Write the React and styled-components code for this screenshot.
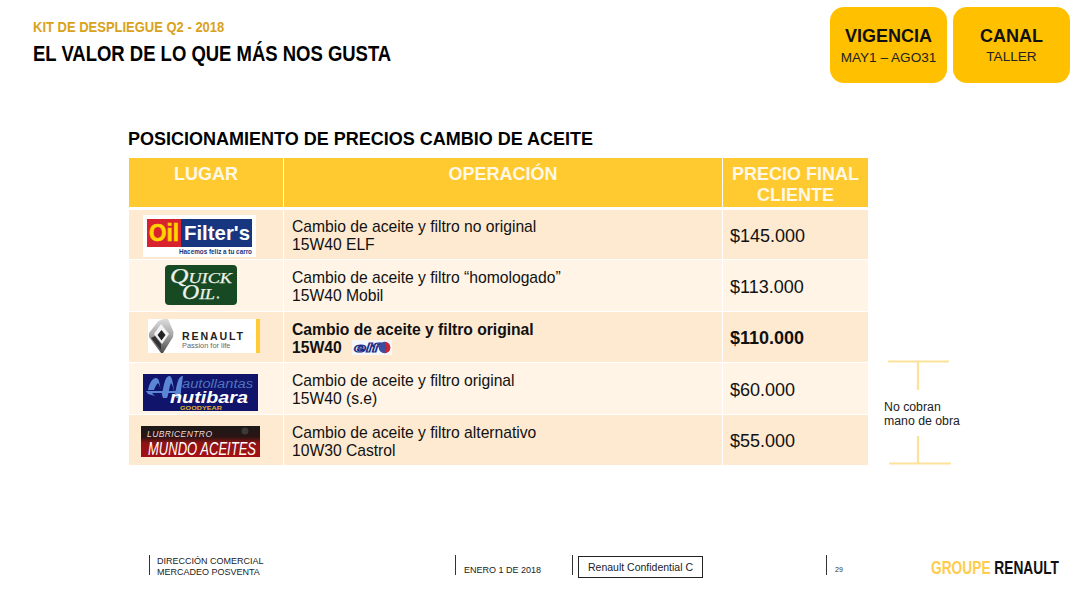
import React from "react";
import styled, { createGlobalStyle } from "styled-components";

const Global = createGlobalStyle`
  html, body { margin: 0; padding: 0; background: #fff; }
  body { font-family: "Liberation Sans", Arial, sans-serif; color: #000; }
`;

const Page = styled.div`
  width: 1080px;
  height: 608px;
  display: flex;
  flex-direction: column;
  overflow: hidden;
  background: #fff;
`;

const Header = styled.header`
  height: 83px;
  padding: 7px 10px 0 33px;
  box-sizing: border-box;
  display: flex;
  justify-content: space-between;
  align-items: flex-start;
`;

const Titles = styled.div`
  padding-top: 11px;
  font-weight: 700;
  width: 400px;
`;

const Kicker = styled.div`
  font-size: 15.5px;
  line-height: 18px;
  color: #d9a21b;
  white-space: nowrap;
  transform: scaleX(0.838);
  transform-origin: left center;
`;

const Title = styled.h1`
  margin: 5px 0 0;
  font-size: 22.5px;
  line-height: 26px;
  font-weight: 700;
  color: #000;
  white-space: nowrap;
  transform: scaleX(0.821);
  transform-origin: left center;
`;

const Badges = styled.div`
  display: flex;
  gap: 6px;
`;

const Badge = styled.div`
  width: 117px;
  height: 76px;
  border-radius: 14px;
  background: #ffc000;
  box-sizing: border-box;
  padding-top: 18px;
  text-align: center;
`;

const BadgeTitle = styled.div`
  font-size: 18px;
  line-height: 22px;
  font-weight: 700;
  color: #111;
`;

const BadgeText = styled.div`
  font-size: 13.6px;
  line-height: 16px;
  margin-top: ${(p) => p.$mt}px;
  color: #222;
`;

const Main = styled.main`
  flex: 1;
  padding: 46px 0 0 129px;
`;

const SectionTitle = styled.h2`
  margin: 0 0 9px -1px;
  font-size: 18px;
  line-height: 20px;
  font-weight: 700;
`;

const Content = styled.div`
  display: flex;
  align-items: flex-end;
`;

const Table = styled.div`
  width: 739px;
  display: grid;
  grid-template-columns: 154px 438px 145px;
  column-gap: 1px;
`;

const HeadCell = styled.div`
  height: 49px;
  margin-bottom: 3px;
  background: #ffca2f;
  color: #fff8e6;
  font-size: 18px;
  line-height: 21px;
  font-weight: 700;
  text-align: center;
  padding-top: 6px;
  box-sizing: border-box;
`;

const Cell = styled.div`
  height: ${(p) => p.$h}px;
  margin-bottom: 1px;
  background: ${(p) => (p.$alt ? "#fff4e6" : "#feead1")};
  display: flex;
  align-items: center;
  box-sizing: border-box;
  font-weight: ${(p) => (p.$bold ? 700 : 400)};
  color: #111;
`;

const LogoCell = styled(Cell)`
  align-items: flex-start;
  padding-left: ${(p) => p.$left}px;
  padding-top: ${(p) => p.$top}px;
  & > svg { display: block; overflow: visible; }
`;

const OperationCell = styled(Cell)`
  padding: 3px 0 0 8px;
  font-size: 15.7px;
  line-height: 18px;
  letter-spacing: -0.02px;
`;

const PriceCell = styled(Cell)`
  padding: 3px 0 0 7px;
  font-size: 18px;
`;

const InlineRow = styled.span`
  display: inline-flex;
  align-items: center;
  gap: 10px;
`;

const Note = styled.aside`
  width: 76px;
  margin-left: 16px;
  margin-bottom: 1px;
  height: 105px;
  display: flex;
  flex-direction: column;
  justify-content: space-between;
`;

const NoteText = styled.div`
  font-size: 12.3px;
  line-height: 14px;
  padding-top: 2px;
  color: #222;
`;

const Footer = styled.footer`
  height: 53px;
  display: flex;
  align-items: flex-start;
  font-size: 9px;
  color: #222;
`;

const FooterItem = styled.div`
  flex: none;
  border-left: 1px solid #333;
  box-sizing: border-box;
  height: 20px;
  width: ${(p) => p.$w}px;
  padding-left: ${(p) => p.$pad ?? 7}px;
  padding-top: ${(p) => (p.$low ? 0 : 1)}px;
  margin-left: ${(p) => p.$ml}px;
  display: flex;
  align-items: ${(p) => (p.$low ? "flex-end" : "flex-start")};
  line-height: 10.5px;
  white-space: nowrap;
`;

const PageNumber = styled.span`
  font-size: 7px;
  color: #333;
`;

const Confidential = styled.div`
  border: 1px solid #222;
  width: 125px;
  height: 22px;
  margin: 1px 0 0 5px;
  box-sizing: border-box;
  font-size: 10.5px;
  line-height: 20px;
  text-align: center;
  color: #222;
  flex: none;
`;

const Group = styled.div`
  flex: none;
  width: 128px;
  margin-left: 79px;
  margin-top: 3px;
  font-weight: 700;
  font-size: 17.5px;
  line-height: 20px;
  white-space: nowrap;
  color: #111;
  transform: scaleX(0.785);
  transform-origin: left center;
`;

const GroupAccent = styled.span`
  color: #ffcc4d;
`;

const TBar = ({ flip }) => (
  <svg width="68" height="32" viewBox="0 0 68 32">
    {flip ? (
      <path d="M5 30.5H67M34 3V30" stroke="#fde29a" strokeWidth="2.2" fill="none" />
    ) : (
      <path d="M4 1.5H65M34 1V30" stroke="#fde29a" strokeWidth="2.2" fill="none" />
    )}
  </svg>
);

const OilFilters = () => (
  <svg width="113" height="42" viewBox="0 0 113 42" fontFamily="Liberation Sans, sans-serif" fontWeight="700">
    <rect width="113" height="42" fill="#fff" />
    <rect x="4" y="4" width="34" height="28" fill="#d8232f" />
    <rect x="38" y="4" width="71" height="28" fill="#16377f" />
    <text x="6" y="26" fontSize="23" fill="#ffd400" stroke="#ffd400" strokeWidth=".6" textLength="30" lengthAdjust="spacingAndGlyphs">Oil</text>
    <text x="41" y="25" fontSize="21" fill="#fff" textLength="66" lengthAdjust="spacingAndGlyphs">Filter's</text>
    <text x="36" y="39" fontSize="6.4" fill="#16377f" textLength="73" lengthAdjust="spacingAndGlyphs">Hacemos feliz a tu carro</text>
  </svg>
);

const QuickOil = () => (
  <svg width="74" height="42" viewBox="0 0 74 42" fontFamily="Liberation Serif, serif" fontStyle="italic">
    <rect x="1" y="0" width="72" height="40" rx="4" fill="#174a23" />
    <text x="6" y="18" fontSize="15" fill="#eef2ec" stroke="#eef2ec" strokeWidth=".25" textLength="62" lengthAdjust="spacingAndGlyphs">
      <tspan fontSize="21">Q</tspan>UICK
    </text>
    <text x="18" y="34" fontSize="15" fill="#eef2ec" stroke="#eef2ec" strokeWidth=".25" textLength="33" lengthAdjust="spacingAndGlyphs">
      <tspan fontSize="20">O</tspan>IL
    </text>
    <circle cx="54" cy="32.5" r="1.3" fill="#cfd8cc" />
  </svg>
);

const RenaultLogo = () => (
  <svg width="112" height="34" viewBox="0 0 112 34" fontFamily="Liberation Sans, sans-serif">
    <defs>
      <linearGradient id="rg" x1="0" y1="0" x2="0" y2="1">
        <stop offset="0" stopColor="#dcdcdc" />
        <stop offset=".45" stopColor="#a8a8a8" />
        <stop offset="1" stopColor="#4a4a4a" />
      </linearGradient>
    </defs>
    <rect width="112" height="34" fill="#fff" />
    <path d="M10 2.5Q13 0 16 0H20L25.5 13L25 18L15 34H13L1 18L1 14Z" fill="url(#rg)" />
    <path d="M13 5L21 15L14 25L6 15Z" fill="#f4f4f4" />
    <path d="M13.5 11L17.5 16L13.5 21.5L9.5 16Z" fill="#222" />
    <path d="M13 25L7 17L3 19L13 31Z" fill="#333" />
    <text x="34" y="20.5" fontSize="10.6" fontWeight="700" fill="#222" textLength="61" lengthAdjust="spacing">RENAULT</text>
    <text x="34" y="29" fontSize="7.4" fill="#666">Passion for life</text>
    <rect x="108" y="0" width="4" height="34" fill="#ffcc33" />
  </svg>
);

const Nutibara = () => (
  <svg width="115" height="37" viewBox="0 0 115 37" fontFamily="Liberation Sans, sans-serif" fontStyle="italic" fontWeight="700">
    <rect width="115" height="37" fill="#10146b" />
    <path d="M5 16C7 6 12 2 15 5C17 7 17 16 19 20C21 10 22 3 26 2C30 1 30 14 32 20C34 10 35 2 40 2L37 24H33C31 18 30 11 28 9C26 13 26 20 24 24H20C18 18 17 11 15 9C13 11 12 13 11 16Z" fill="#5b86d6" />
    <path d="M3 17H38V19H9L12 22L5 20Z" fill="#5b86d6" />
    <text x="39" y="14" fontSize="12" fontWeight="400" fill="#4f74bd" textLength="71" lengthAdjust="spacingAndGlyphs">autollantas</text>
    <text x="27" y="29" fontSize="17" fill="#fff" textLength="78" lengthAdjust="spacingAndGlyphs">nutibara</text>
    <text x="37" y="35.5" fontSize="6" fontStyle="normal" fill="#e0b52a" textLength="42" lengthAdjust="spacingAndGlyphs">GOODYEAR</text>
  </svg>
);

const MundoAceites = () => (
  <svg width="119" height="31" viewBox="0 0 119 31" fontFamily="Liberation Sans, sans-serif" fontStyle="italic">
    <defs>
      <linearGradient id="mg" x1="0" y1="0" x2="0" y2="1">
        <stop offset="0" stopColor="#1c1a18" />
        <stop offset=".35" stopColor="#2a1414" />
        <stop offset=".55" stopColor="#8f1414" />
        <stop offset="1" stopColor="#a50f14" />
      </linearGradient>
    </defs>
    <rect width="119" height="31" fill="url(#mg)" />
    <circle cx="104" cy="5" r="3.5" fill="#3c3a38" />
    <text x="6" y="11" fontSize="8.5" fill="#f3d6d6" textLength="65" lengthAdjust="spacing">LUBRICENTRO</text>
    <text x="7" y="28.5" fontSize="18" fill="#fff" textLength="108" lengthAdjust="spacingAndGlyphs">MUNDO ACEITES</text>
  </svg>
);

const ElfLogo = () => (
  <svg width="40" height="15" viewBox="0 0 40 15" fontFamily="Liberation Sans, sans-serif" fontStyle="italic" fontWeight="700">
    <rect width="40" height="15" fill="#f6f7fb" />
    <text x="2" y="12" fontSize="13" fill="#fff" stroke="#1c2f88" strokeWidth="1.1" textLength="25" lengthAdjust="spacingAndGlyphs">elf</text>
    <circle cx="32.5" cy="7.5" r="5.8" fill="#3a4f9f" />
    <path d="M32.5 1.7a5.8 5.8 0 0 1 0 11.6C35 10 35 5 32.5 1.7Z" fill="#d3232c" />
  </svg>
);

const rows = [
  { Logo: OilFilters, left: 14, top: 5, h: 49, lines: ["Cambio de aceite y filtro no original", "15W40 ELF"], price: "$145.000" },
  { Logo: QuickOil, left: 35, top: 5, h: 51, alt: true, lines: ["Cambio de aceite y filtro “homologado”", "15W40 Mobil"], price: "$113.000" },
  { Logo: RenaultLogo, left: 19, top: 7, h: 50, bold: true, lines: ["Cambio de aceite y filtro original", "15W40"], elf: true, price: "$110.000" },
  { Logo: Nutibara, left: 14, top: 11, h: 51, alt: true, lines: ["Cambio de aceite y filtro original", "15W40 (s.e)"], price: "$60.000" },
  { Logo: MundoAceites, left: 12, top: 11, h: 50, lines: ["Cambio de aceite y filtro alternativo", "10W30 Castrol"], price: "$55.000" },
];

export default function App() {
  return (
    <Page>
      <Global />
      <Header>
        <Titles>
          <Kicker>KIT DE DESPLIEGUE Q2 - 2018</Kicker>
          <Title>EL VALOR DE LO QUE MÁS NOS GUSTA</Title>
        </Titles>
        <Badges>
          <Badge>
            <BadgeTitle>VIGENCIA</BadgeTitle>
            <BadgeText $mt={3}>MAY1 – AGO31</BadgeText>
          </Badge>
          <Badge>
            <BadgeTitle>CANAL</BadgeTitle>
            <BadgeText $mt={2}>TALLER</BadgeText>
          </Badge>
        </Badges>
      </Header>
      <Main>
        <SectionTitle>POSICIONAMIENTO DE PRECIOS CAMBIO DE ACEITE</SectionTitle>
        <Content>
          <Table>
            <HeadCell>LUGAR</HeadCell>
            <HeadCell>OPERACIÓN</HeadCell>
            <HeadCell>PRECIO FINAL CLIENTE</HeadCell>
            {rows.map(({ Logo, left, top, h, alt, bold, lines, elf, price }) => (
              <React.Fragment key={price}>
                <LogoCell $h={h} $alt={alt} $left={left} $top={top}>
                  <Logo />
                </LogoCell>
                <OperationCell $h={h} $alt={alt} $bold={bold}>
                  <div>
                    <div>{lines[0]}</div>
                    <InlineRow>
                      {lines[1]}
                      {elf && <ElfLogo />}
                    </InlineRow>
                  </div>
                </OperationCell>
                <PriceCell $h={h} $alt={alt} $bold={bold}>
                  {price}
                </PriceCell>
              </React.Fragment>
            ))}
          </Table>
          <Note>
            <TBar />
            <NoteText>
              No cobran
              <br />
              mano de obra
            </NoteText>
            <TBar flip />
          </Note>
        </Content>
      </Main>
      <Footer>
        <FooterItem $ml={149} $w={306}>
          <span>
            DIRECCIÓN COMERCIAL
            <br />
            MERCADEO POSVENTA
          </span>
        </FooterItem>
        <FooterItem $ml={0} $w={117} $pad={8} $low>
          ENERO 1 DE 2018
        </FooterItem>
        <FooterItem $ml={0} $w={1} $pad={0} />
        <Confidential>Renault Confidential C</Confidential>
        <FooterItem $ml={123} $w={26} $pad={8} $low>
          <PageNumber>29</PageNumber>
        </FooterItem>
        <Group>
          <GroupAccent>GROUPE</GroupAccent> RENAULT
        </Group>
      </Footer>
    </Page>
  );
}
